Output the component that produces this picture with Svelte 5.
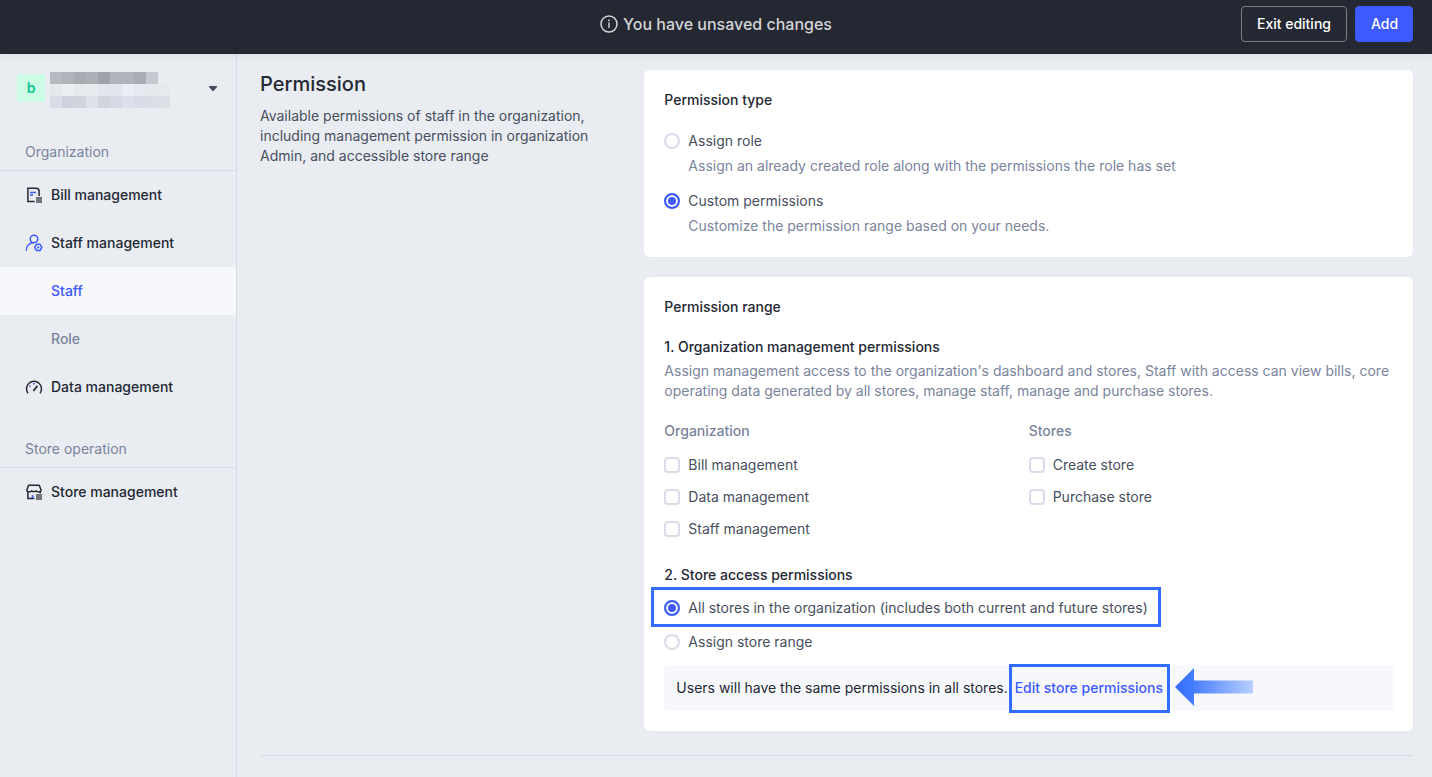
<script>
  let permissionType = 'custom';
  let storeAccess = 'all';

  const types = [
    { value: 'role', label: 'Assign role', hint: 'Assign an already created role along with the permissions the role has set' },
    { value: 'custom', label: 'Custom permissions', hint: 'Customize the permission range based on your needs.' },
  ];

  let groups = [
    {
      name: 'Organization',
      options: [
        { label: 'Bill management', checked: false },
        { label: 'Data management', checked: false },
        { label: 'Staff management', checked: false },
      ],
    },
    {
      name: 'Stores',
      options: [
        { label: 'Create store', checked: false },
        { label: 'Purchase store', checked: false },
      ],
    },
  ];

  // masked account name, one colour per block
  const mask = [
    ['#b7bac0', '#b0b3ba', '#a8abb2', '#acafb6', '#9fa2a9', '#b1b4bc', '#b0b3ba', '#a9acb3', '#c6c9d0'],
    ['#e4e7ec', '#eaedf2', '#e6e9ee', '#e7eaef', '#e3e6ec', '#e2e6ed', '#eaedf3', '#e6e9ef', '#e5e9ee', '#e6eaef'],
    ['#d8dce6', '#ced2dc', '#d0d4dd', '#dde1ea', '#d1d5de', '#d6dae4', '#dce0ea', '#d8dce6', '#d9dde6', '#dce0e6'],
  ];
</script>

<div class="page">
  <header>
    <div class="message">
      <svg width="18" height="18" viewBox="0 0 18 18" fill="none" stroke="currentColor">
        <circle cx="9" cy="9" r="8" stroke-width="1.5" />
        <path d="M9 7.5v5.5" stroke-width="1.4" />
        <circle cx="9" cy="5.4" r=".9" fill="currentColor" stroke="none" />
      </svg>
      You have unsaved changes
    </div>
    <div class="actions">
      <button class="btn">Exit editing</button>
      <button class="btn primary">Add</button>
    </div>
  </header>

  <div class="body">
    <aside>
      <button class="account" aria-label="Switch account">
        <span class="avatar">b</span>
        <svg class="mask" width="120" height="36" viewBox="0 0 120 36" shape-rendering="crispEdges">
          {#each mask as row, y}
            {#each row as color, x}
              <rect x={x * 12} y={y * 12} width="12" height="12" fill={color} />
            {/each}
          {/each}
        </svg>
        <svg class="caret" width="8" height="5" viewBox="0 0 8 5"><path d="M0 0h8v1L5 4.5q-1 1-2 0L0 1z" fill="#474f5e" /></svg>
      </button>

      <nav>
        <h2>Organization</h2>
        <a href="#bill">
          <svg width="18" height="18" viewBox="0 0 18 18" fill="none" stroke="#242833" stroke-width="1.5">
            <path d="M9.6 15.4H2.9V2.3h8.2q3 0 3 3v4.6" />
            <path d="M5 6.4h6M5 9h3" stroke="#3d5afe" />
            <path d="M11 11.2h6v5.6h-6z" fill="#8a8e98" stroke="none" />
            <path d="M11 11.8h6M11 14h6M11 16.2h6" stroke="#5c606b" stroke-width="1.2" />
          </svg>
          Bill management
        </a>
        <a href="#staff-management">
          <svg width="18" height="18" viewBox="0 0 18 18" fill="none" stroke="#3d5afe" stroke-width="1.5">
            <circle cx="9" cy="5" r="3.8" />
            <path d="M1.2 16.8c0-4.6 2.9-7.6 6.8-8" />
            <path d="M11.6 10.3h3.4l1.9 3.1-1.900 3.100h-3.400l-1.900-3.100z" stroke-linejoin="round" />
            <circle cx="13.3" cy="13.4" r="1.1" fill="#3d5afe" stroke="none" />
          </svg>
          Staff management
        </a>
        <a class="sub active" href="#staff">Staff</a>
        <a class="sub" href="#role">Role</a>
        <a href="#data">
          <svg width="18" height="18" viewBox="0 0 18 18" fill="none" stroke="#242833" stroke-width="1.5">
            <path d="M3 15.3A7.5 7.5 0 1 1 15 15.3" />
            <path d="M8.4 12.9l4-5" stroke-width="1.7" />
            <path d="M4.3 8.3h1.5M8 5.8h1.6" stroke="#3d5afe" stroke-width="1.6" />
          </svg>
          Data management
        </a>

        <h2>Store operation</h2>
        <a href="#store">
          <svg width="18" height="18" viewBox="0 0 18 18" fill="none" stroke="#242833" stroke-width="1.5">
            <path d="M4.2 8.800H3.600q-2 0-1.700-2L3.600 2.200h10.600l1.800 4.600q.3 2-1.700 2h-.7" stroke-linejoin="round" />
            <path d="M3.600 8.400q1.700 1.200 3-.5 2.300 1.600 4.600 0 1.300 1.700 3 .5" stroke-width="1.300" />
            <path d="M2.900 8.600v6.800h6.500M15.200 8.600v1.600" />
            <path d="M7.600 15v-2.900" stroke="#3d5afe" stroke-width="1.800" />
            <path d="M11 11.2h6v5.6h-6z" fill="#8a8e98" stroke="none" />
            <path d="M11 11.8h6M11 14h6M11 16.2h6" stroke="#5c606b" stroke-width="1.2" />
          </svg>
          Store management
        </a>
      </nav>
    </aside>

    <main>
      <section>
        <div class="intro">
          <h1>Permission</h1>
          <p>Available permissions of staff in the organization, including management permission in organization Admin, and accessible store range</p>
        </div>

        <div class="cards">
          <div class="card">
            <h3>Permission type</h3>
            <div class="types">
              {#each types as type}
                <div>
                  <label>
                    <input type="radio" name="type" value={type.value} bind:group={permissionType} />
                    {type.label}
                  </label>
                  <p class="hint">{type.hint}</p>
                </div>
              {/each}
            </div>
          </div>

          <div class="card">
            <h3>Permission range</h3>
            <h4>1. Organization management permissions</h4>
            <p class="desc">Assign management access to the organization's dashboard and stores, Staff with access can view bills, core operating data generated by all stores, manage staff, manage and purchase stores.</p>
            <div class="groups">
              {#each groups as group}
                <div class="group">
                  <h5>{group.name}</h5>
                  {#each group.options as option}
                    <label>
                      <input type="checkbox" bind:checked={option.checked} />
                      {option.label}
                    </label>
                  {/each}
                </div>
              {/each}
            </div>

            <h4>2. Store access permissions</h4>
            <div class="access">
              <label class="marked">
                <input type="radio" name="access" value="all" bind:group={storeAccess} />
                All stores in the organization (includes both current and future stores)
              </label>
              <label>
                <input type="radio" name="access" value="range" bind:group={storeAccess} />
                Assign store range
              </label>
            </div>
            <div class="note">
              Users will have the same permissions in all stores.
              <a class="marked" href="#edit">
                Edit store permissions
                <svg class="arrow" width="78" height="38" viewBox="0 0 78 38">
                  <defs>
                    <linearGradient id="fade">
                      <stop offset="0" stop-color="#336dff" />
                      <stop offset=".2" stop-color="#427aff" />
                      <stop offset="1" stop-color="#b8cfff" />
                    </linearGradient>
                  </defs>
                  <path d="M0 19L19 0v12.5h59v13H19V38z" fill="url(#fade)" />
                </svg>
              </a>
            </div>
          </div>
        </div>
      </section>
      <hr />
    </main>
  </div>
</div>

<style>
  :global(body) {
    margin: 0;
    background: #e9edf2;
  }

  .page {
    display: flex;
    flex-direction: column;
    min-height: 100vh;
    font: 14px/20px Inter, 'Open Sans', sans-serif;
    color: #474f5e;
  }

  h1, h2, h3, h4, h5, p {
    margin: 0;
    font-size: 14px;
    line-height: 20px;
  }

  a {
    text-decoration: none;
  }

  button {
    font: inherit;
    cursor: pointer;
  }

  header {
    display: grid;
    grid-template-columns: 1fr auto 1fr;
    align-items: center;
    height: 54px;
    padding: 0 19px;
    box-sizing: border-box;
    background: #242833;
    box-shadow: 0 1px 6px rgba(36, 40, 51, 0.08);
    z-index: 1;
  }

  .message {
    grid-column: 2;
    display: flex;
    align-items: center;
    gap: 5px;
    padding-bottom: 6px;
    font-size: 16px;
    font-weight: 500;
    color: #d3d4d6;
  }

  .actions {
    display: flex;
    justify-content: flex-end;
    gap: 8px;
    padding-bottom: 6px;
  }

  .btn {
    height: 36px;
    padding: 0 15px;
    border: 1px solid #7c7e85;
    border-radius: 4px;
    background: none;
    font-weight: 500;
    color: #fff;
  }

  .primary {
    width: 58px;
    border-color: #3d5afe;
    background: #3d5afe;
  }

  .body {
    display: flex;
    flex: 1;
  }

  aside {
    flex: none;
    width: 236px;
    border-right: 1px solid #d5d9e8;
  }

  .account {
    display: flex;
    align-items: center;
    width: 100%;
    height: 68px;
    margin-bottom: 4px;
    padding: 0 19px 0 17px;
    border: 0;
    background: none;
  }

  .avatar {
    width: 28px;
    margin-right: 5px;
    border-radius: 3px;
    background: #ccfce6;
    font-weight: 600;
    line-height: 28px;
    color: #0cc48d;
  }

  .mask {
    margin-top: 4px;
  }

  .caret {
    margin-left: auto;
  }

  h2 {
    padding: 16px 25px 8px;
    border-bottom: 1px solid #d5d9e8;
    font-weight: 400;
    color: #7a849c;
  }

  nav a + h2 {
    margin-top: 12px;
  }

  nav a {
    display: flex;
    align-items: center;
    gap: 8px;
    height: 48px;
    padding: 0 25px;
    font-weight: 500;
    color: #242833;
  }

  nav .sub {
    padding-left: 51px;
    color: #7a849c;
  }

  nav .active {
    background: #f7f8fc;
    color: #3d5afe;
  }

  main {
    flex: 1;
    padding: 16px 19px 20px 23px;
  }

  section {
    display: grid;
    grid-template-columns: 1fr 2fr;
  }

  .intro {
    padding-right: 24px;
  }

  h1 {
    margin-bottom: 8px;
    font-size: 20px;
    font-weight: 500;
    line-height: 28px;
    color: #242833;
  }

  .cards {
    display: grid;
    gap: 20px;
  }

  .card {
    padding: 20px;
    border-radius: 6px;
    background: #fff;
  }

  h3, h4 {
    font-weight: 500;
    color: #242833;
  }

  label {
    display: flex;
    align-items: center;
    gap: 8px;
    width: fit-content;
  }

  input {
    flex: none;
    appearance: none;
    width: 16px;
    height: 16px;
    margin: 0;
    border: 2px solid #d8dbea;
    border-radius: 4px;
    background: #fff;
  }

  input[type='radio'] {
    border-radius: 50%;
  }

  input:checked {
    border-color: #3d5afe;
    background: #3d5afe;
    box-shadow: inset 0 0 0 2px #fff;
  }

  .types {
    display: grid;
    gap: 15px;
    padding: 21px 0 1px;
  }

  .hint {
    margin: 5px 0 0 24px;
    color: #7a849c;
  }

  h4 {
    margin: 20px 0 4px;
  }

  .desc {
    color: #7a849c;
  }

  .groups {
    display: grid;
    grid-template-columns: 1fr 1fr;
    align-items: start;
    margin: 20px 0 26px;
  }

  .group {
    display: grid;
    gap: 12px;
  }

  h5 {
    margin-bottom: 2px;
    font-weight: 500;
    color: #7a849c;
  }

  .access {
    display: grid;
    gap: 14px;
    margin: 13px 0;
  }

  .note {
    padding: 13px 12px;
    border-radius: 4px;
    background: #f7f8fc;
    color: #242833;
  }

  .note a {
    margin-left: 3px;
    font-weight: 500;
    color: #3d5afe;
  }

  /* callout frames drawn over the form */
  .marked {
    position: relative;
  }

  .marked::after {
    content: '';
    position: absolute;
    inset: -11px -13px -9px -13px;
    border: 3px solid #336dff;
    pointer-events: none;
  }

  a.marked {
    display: inline-block;
  }

  a.marked::after {
    inset: -14px -7px -15px -6px;
  }

  .arrow {
    position: absolute;
    top: -10px;
    left: calc(100% + 12px);
  }

  hr {
    margin: 24px 0 0;
    border: 0;
    border-top: 1px solid #d5d9e8;
  }
</style>
